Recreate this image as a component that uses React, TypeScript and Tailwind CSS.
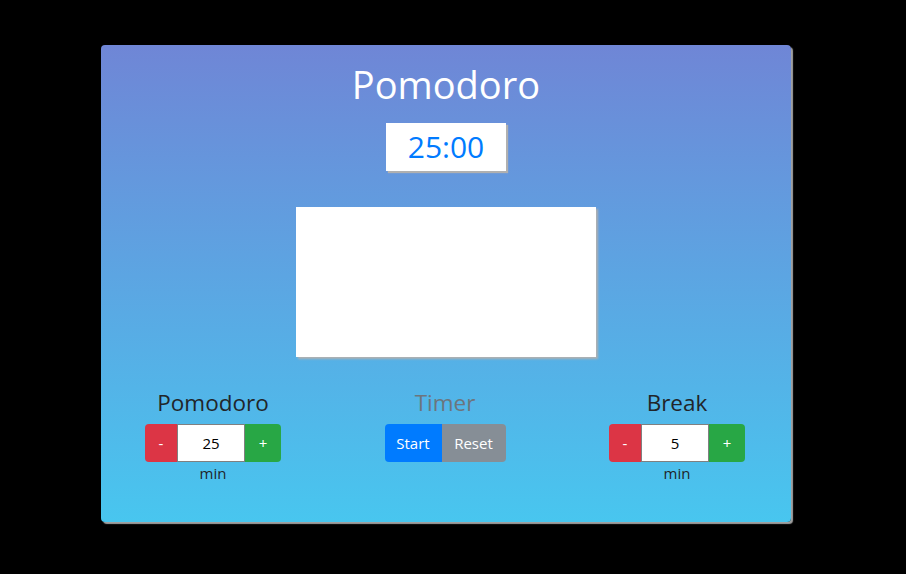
import { useState } from "react";

const font = { fontFamily: '"Open Sans", "Noto Sans", sans-serif' };

function Stepper({ value, onMinus, onPlus }: { value: number; onMinus: () => void; onPlus: () => void }) {
  return (
    <div className="flex flex-col items-center">
      <div className="flex h-[38px]">
        <button onClick={onMinus} className="w-[32px] rounded-l-[4px] bg-[#dc3545] text-[15px] text-white">
          -
        </button>
        <input
          value={value}
          readOnly
          className="w-[68px] border border-[#808080] bg-white text-center text-[15px] text-black outline-none"
        />
        <button onClick={onPlus} className="w-[36px] rounded-r-[4px] bg-[#28a745] text-[15px] text-white">
          +
        </button>
      </div>
      <div className="text-[15px] leading-[22px] text-[#212529]">min</div>
    </div>
  );
}

export default function App() {
  const [work, setWork] = useState(25);
  const [rest, setRest] = useState(5);

  return (
    <div className="min-h-[574px] w-full bg-black pt-[45px]" style={font}>
      <div className="ml-[101px] flex h-[477px] w-[690px] flex-col items-center rounded-[4px] bg-[linear-gradient(to_top,#48c6ef_0%,#6f86d6_100%)] shadow-[2px_2px_1px_#a0a0a0]">
        <h1 className="mt-[11px] text-[38px] leading-[56px] text-white">Pomodoro</h1>
        <div className="mt-[11px] flex h-[48px] w-[120px] items-center justify-center bg-white shadow-[2px_2px_1px_#b0b0b0]">
          <span className="text-[30px] leading-none text-[#007bff]">
            {String(work).padStart(2, "0")}:00
          </span>
        </div>
        <div className="mt-[36px] h-[150px] w-[300px] bg-white shadow-[2px_2px_2px_#b0b0b0]" />
        <div className="mt-[31px] flex w-[696px] -translate-x-[1px]">
          <div className="flex w-[232px] flex-col items-center">
            <h4 className="text-[22.5px] leading-[30px] text-[#212529]">Pomodoro</h4>
            <div className="mt-[6px]">
              <Stepper value={work} onMinus={() => setWork(Math.max(1, work - 1))} onPlus={() => setWork(work + 1)} />
            </div>
          </div>
          <div className="flex w-[232px] flex-col items-center">
            <h4 className="text-[22.5px] leading-[30px] text-[#6c757d]">Timer</h4>
            <div className="mt-[6px] flex h-[38px]">
              <button className="w-[57px] rounded-l-[4px] bg-[#007bff] text-[15px] text-white">Start</button>
              <button className="w-[64px] rounded-r-[4px] bg-[#868e96] text-[15px] text-white">Reset</button>
            </div>
          </div>
          <div className="flex w-[232px] flex-col items-center">
            <h4 className="text-[22.5px] leading-[30px] text-[#212529]">Break</h4>
            <div className="mt-[6px]">
              <Stepper value={rest} onMinus={() => setRest(Math.max(1, rest - 1))} onPlus={() => setRest(rest + 1)} />
            </div>
          </div>
        </div>
      </div>
    </div>
  );
}
